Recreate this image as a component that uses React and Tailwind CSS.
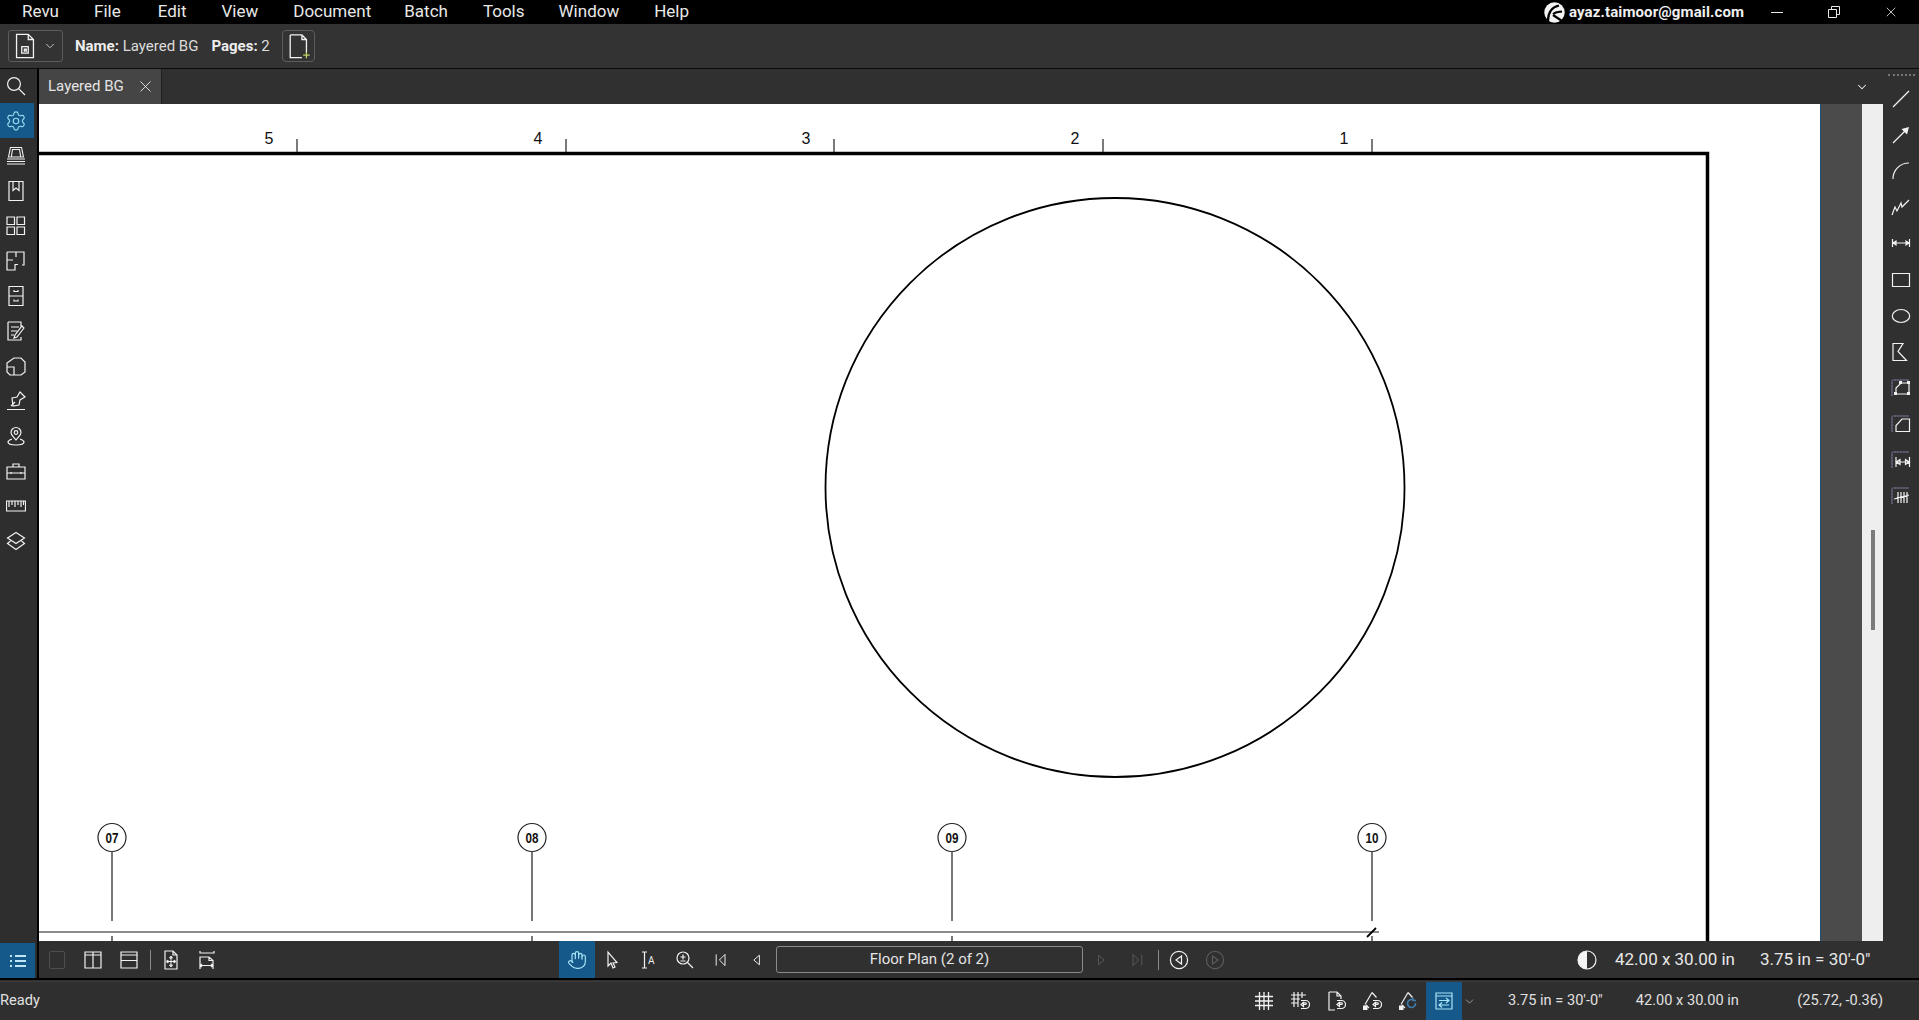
import React from "react";
import { Settings, ChevronDown, X, Hand } from "lucide-react";

const I = ({ s = 20, c = "#f2f2f2", w = 1.2, children, className = "" }) => (
  <svg width={s} height={s} viewBox="0 0 20 20" fill="none" stroke={c} strokeWidth={w} strokeLinejoin="miter" className={className}>
    {children}
  </svg>
);
const P = ({ d, ...r }) => <path d={d} {...r} />;

const railIcons = [
  <I><circle cx="8" cy="8" r="6.4" /><P d="M12.6 12.6L19 19" /></I>,
  <Settings size={22} strokeWidth={1.25} color="#9bdcf0" />,
  <I w={1.1}><P d="M4.5 1.5h11l2 9.5H2.5z M6.5 3.5h7l1.2 7.5H5.3z M1 13h18M1 15.5h18M1 18h18" /></I>,
  <I><P d="M3 .5h14v19H3z M7 .5v9l3-2.5 3 2.5V.5" /></I>,
  <I><P d="M1 1h7.5v7.5H1z M11 1h7.5v7.5H11z M1 11h7.5v7.5H1z M11 11h7.5v7.5H11z" /></I>,
  <I><P d="M1 1h17v13h-2 M1 1v18h8v-5.5h3 M10 1v5 M1 9h6" /></I>,
  <I><P d="M3 .5h14v19H3z M3 10h14 M8 4v1.5h4V4 M8 13.5V15h4v-1.5" /></I>,
  <I><P d="M2 1h13v5 M2 1v18h13v-3 M5 6h8 M5 10h6 M5 14h3 M18 7l-7 9-3 1 1-3 7-9z" /></I>,
  <I><P d="M1 7L8 2h7l4 4v10l-4 3H4l-3-3z M1 11h7v7.5" /></I>,
  <I><P d="M1 18.5h18 M6 7l5-1 3-5 5 5-5 3-1 5-6 1z M5 15l4-4" /></I>,
  <I><P d="M10 14C7 10 5 9 5 6.5a5 5 0 0 1 10 0C15 9 13 10 10 14z M6 13C3 14 2 15 2 16c0 2 4 3 8 3s8-1 8-3c0-1-1-2-4-3" /><circle cx="10" cy="6.5" r="1.8" /></I>,
  <I><P d="M1 6h18v12H1z M7 6V3h6v3 M1 12h18 M5 11v2 M15 11v2" /></I>,
  <I><P d="M.5 5h19v10H.5z M3 5v6 M6 5v4 M9 5v6 M12 5v4 M15 5v6 M17.5 5v4" /></I>,
  <I><P d="M10 1.5L18.5 7 10 12.5 1.5 7z M4.5 10L1.5 12.5 10 18.5l8.5-6-3-2.5" /></I>,
];

const snap = <P d="M1 2h17 M1 2v16 M4 1v2 M7 1v2 M10 1v2 M13 1v2 M16 1v2 M0 5h2 M0 8h2 M0 11h2 M0 14h2 M0 17h2" stroke="#6a6480" strokeWidth="1" />;
const rightIcons = [
  <I><P d="M2 18L18 2" /></I>,
  <I><P d="M2 18L14 6" /><P d="M18 2l-7.5 2 5.5 5.5z" fill="#f2f2f2" stroke="none" /></I>,
  <I><P d="M2 18C2 9 9 2 18 2" /></I>,
  <I><P d="M1 18l3-8 2 4 4-8 1 4 7-7" /></I>,
  <I><P d="M1.5 6v8 M18.5 6v8 M2 10h16 M2 10l3-2v4z M18 10l-3-2v4z" /></I>,
  <I><P d="M1.5 3.5h17v13h-17z" /></I>,
  <I><ellipse cx="10" cy="10" rx="8.7" ry="6.5" /></I>,
  <I><P d="M2 1.5h10l-5 8 8.5 9H2z" /></I>,
  <I>{snap}<P d="M5 16l0-6 5-5h8v11z" /><P d="M3 14h3v3H3z M8 3h3v3H8z M16 3h3v3h-3z M16 14h3v3h-3z" fill="#f2f2f2" stroke="none" /></I>,
  <I>{snap}<P d="M5 17.5v-6l6-6.5h7.5v12.5z" /></I>,
  <I>{snap}<P d="M5 7v10 M18.5 7v10 M5 12h13.5 M5 12l4-2.5v5z M18.5 12l-4-2.5v5z" /></I>,
  <I>{snap}<P d="M7 6l0 11 M10 6v11 M13 6v11 M16 6v11 M3 13L18 9" /></I>,
];

const undo = "M11 9.5h4.5a4 4 0 0 1 0 8H11 M13 13.5h2.5a.8.8 0 0 0 0-1.6H12 M11 13.5l2.5-2v4z";
const pencil = "M10 1.5L3 13.5 M10 1.5l4.5 5 M7 17l-3-3";
const square = "M1 14.5h4.5v4.5H1z";

const Cell = ({ w = "w-[36px]", children, className = "" }) => (
  <div className={`${w} h-full flex items-center justify-center shrink-0 ${className}`}>{children}</div>
);
const Sep = () => <div className="w-px h-[20px] ml-[3px] mr-[2px] bg-[#8a8a8a] shrink-0" />;

const Logo = () => (
  <svg width="21" height="21" viewBox="0 0 21 21" className="shrink-0">
    <circle cx="10.5" cy="10.5" r="10.2" fill="#f4f4f4" />
    <path d="M4 19C4 10 8 5 15 3.5 M9 12c3-2.5 6-2 9-2.5 M9 13l9 6" stroke="#000" strokeWidth="2.2" fill="none" />
  </svg>
);

const menu = [
  ["Revu", ""], ["File", ""], ["Edit", "ml-[2px]"], ["View", ""], ["Document", ""],
  ["Batch", "-ml-[2px]"], ["Tools", ""], ["Window", "-ml-[1px]"], ["Help", ""],
];

export default function App() {
  return (
    <div className="w-[1919px] h-[1020px] overflow-hidden flex flex-col bg-[#303030] text-[#ededed] [font-family:Roboto,sans-serif]">
      {/* title / menu bar */}
      <div className="h-[24px] bg-black flex items-center shrink-0">
        <div className="flex gap-[35px] pl-[22px] pb-[2px] text-[17px] text-[#e8e8e8] leading-none">
          {menu.map(([m, cls]) => <span key={m} className={cls}>{m}</span>)}
        </div>
        <div className="ml-auto flex items-center h-full">
          <Logo />
          <span className="ml-[4px] text-[15px] font-bold tracking-[0.12px] text-[#efefef] w-[175px] whitespace-nowrap">ayaz.taimoor@gmail.com</span>
          <div className="ml-[27px] w-[12px] h-px bg-[#e8e8e8]" />
          <svg className="ml-[45px]" width="12" height="12" viewBox="0 0 12 12" fill="none" stroke="#e8e8e8" strokeWidth="1"><path d="M.5 3.5h8v8h-8z M3.5 3V.5h8v8H9" /></svg>
          <X className="ml-[43px] mr-[20px]" size={16} strokeWidth={1.2} color="#e8e8e8" />
        </div>
      </div>

      {/* document toolbar */}
      <div className="h-[45px] shrink-0 flex items-center bg-[#333333] border-b border-[#0c0c0c] pl-[8px]">
        <div className="w-[55px] h-[32px] rounded-[3px] border border-[#5c5c5c] flex items-center pl-[3px] gap-[5px]">
          <I s={26} w={1}><P d="M3.5 1h9l4 4v14h-13z M12.5 1v4h4" /><P d="M7.5 10.5h5v5h-5z M9.5 12.5h1.5v1.5H9.5z" /></I>
          <ChevronDown size={14} strokeWidth={1.4} color="#e0e0e0" />
        </div>
        <div className="ml-[12px] text-[15px] whitespace-nowrap">
          <span className="font-bold">Name:</span> <span className="text-[#dcdcdc]">Layered BG</span>
        </div>
        <div className="ml-[13px] text-[15px] whitespace-nowrap">
          <span className="font-bold">Pages:</span> <span className="text-[#dcdcdc]">2</span>
        </div>
        <div className="ml-[12px] w-[33px] h-[32px] rounded-[4px] border border-[#5c5c5c] flex items-center justify-center">
          <I s={26} w={1}><P d="M4 1.5h9l3.5 3.5v10 M13 1.5V5h3.5 M4 1.5V19h9" /><P d="M14 17h5 M16.5 14.5v5" stroke="#c3d06a" /></I>
        </div>
      </div>

      {/* work area */}
      <div className="h-[909px] shrink-0 flex">
        {/* left rail */}
        <div className="w-[39px] shrink-0 bg-[#2e2e2e] border-r-2 border-black flex flex-col">
          {railIcons.map((ic, i) => (
            <div key={i} className={`${i === 0 ? "h-[34px]" : "h-[35px]"} w-[34px] pr-[2px] flex items-center justify-center shrink-0 ${i === 1 ? "bg-[#15598a]" : ""}`}>{ic}</div>
          ))}
          <div className="mt-auto h-[35px] w-[35px] bg-[#15598a] flex items-center justify-center">
            <I s={20} c="#bfe6f5" w={1.8}><P d="M7 5h11 M7 10h11 M7 15h11 M2 5h2 M2 10h2 M2 15h2" /></I>
          </div>
        </div>

        {/* centre */}
        <div className="w-[1844px] shrink-0 flex flex-col">
          <div className="h-[35px] shrink-0 flex items-stretch bg-[#303030]">
            <div className="w-[123px] bg-[#454545] flex items-center pl-[9px] text-[15px] text-[#e4e4e4] border-r border-[#1f1f1f]">
              Layered BG
              <X className="ml-[12px]" size={19} strokeWidth={1.1} color="#ededed" />
            </div>
            <ChevronDown className="ml-auto mr-[14px] self-center" size={14} strokeWidth={1.8} color="#ededed" />
          </div>

          <div className="flex-1 flex min-h-0">
            <div className="w-[1781px] bg-white shrink-0">
              <svg width="1781" height="837" viewBox="39 104 1781 837" className="block">
                <path d="M39 153.5H1707.5V941" fill="none" stroke="#000" strokeWidth="3.5" />
                {[[297, "5"], [566, "4"], [834, "3"], [1103, "2"], [1372, "1"]].map(([x, t]) => (
                  <g key={t}>
                    <line x1={x} y1="139" x2={x} y2="152" stroke="#333" strokeWidth="1.3" />
                    <text x={x - 28} y="143.5" textAnchor="middle" fontSize="16" fill="#111" fontFamily="Liberation Sans, sans-serif">{t}</text>
                  </g>
                ))}
                <circle cx="1115" cy="487.5" r="289.5" fill="none" stroke="#000" strokeWidth="1.8" />
                {[[112, "07"], [532, "08"], [952, "09"], [1372, "10"]].map(([x, t]) => (
                  <g key={t}>
                    <circle cx={x} cy="837.5" r="14" fill="#fff" stroke="#222" strokeWidth="1.2" />
                    <text x={x} y="842.5" textAnchor="middle" fontSize="14" fontWeight="700" fill="#111" fontFamily="Liberation Sans, sans-serif" textLength="13" lengthAdjust="spacingAndGlyphs">{t}</text>
                    <line x1={x} y1="851.5" x2={x} y2="921" stroke="#555" strokeWidth="1.6" />
                    <line x1={x} y1="936" x2={x} y2="941" stroke="#555" strokeWidth="1.6" />
                  </g>
                ))}
                <line x1="39" y1="932" x2="1379" y2="932" stroke="#666" strokeWidth="1.6" />
                <line x1="1367" y1="937" x2="1376" y2="928" stroke="#000" strokeWidth="1.8" />
              </svg>
            </div>
            <div className="w-[42px] bg-[#4b4b4b] border-l border-[#1f4e73] shrink-0" />
            <div className="w-[21px] bg-[#eeeeee] shrink-0 pt-[426px] pl-[9px]">
              <div className="w-[4px] h-[100px] bg-[#7b7b7b]" />
            </div>
          </div>

          {/* page toolbar */}
          <div className="h-[37px] shrink-0 bg-[#303030] flex items-center text-[15px]">
            <Cell><div className="w-[16px] h-[18px] border border-[#4e4e4e] rounded-[2px]" /></Cell>
            <Cell><I><P d="M2 2h16v16H2z M2 5h16 M10 2v16" /></I></Cell>
            <Cell><I><P d="M2 2h16v16H2z M2 5h16 M2 10.5h16" /></I></Cell>
            <Sep />
            <Cell><I><P d="M4 1h8l4 4v14H4z M12 1v4h4" /><P d="M10 7v9 M6 11.5h8 M10 6l-1.5 2h3z M10 17l-1.5-2h3z M5 11.5l2-1.5v3z M15 11.5l-2-1.5v3z" strokeWidth="1" /></I></Cell>
            <Cell><I><P d="M3 1v2h14V1 M3 19V7h9l4 3.5V19 M12 7v3.5h4 M3 15.5h13 M5 14l-2 1.5L5 17 M14 14l2 1.5L14 17" /></I></Cell>
            <div className="ml-[334px] flex items-center h-full">
              <Cell className="bg-[#15598a]"><Hand size={20} strokeWidth={1.4} color="#a8e4f5" /></Cell>
              <Cell><I><P d="M5 2v14l3-3 2 5 2-1-2-4 4-.5z" /></I></Cell>
              <Cell><I><P d="M3 2h5 M3 18h5 M5.5 2v16" /><text x="9" y="14" fontSize="10" fill="#eee" stroke="none" fontFamily="Roboto">A</text></I></Cell>
              <Cell><I><circle cx="8" cy="8" r="6" /><P d="M12.5 12.5L18 18 M5.5 7h5 M8 4.5V9.5 M5.5 11h5" /></I></Cell>
              <Cell><I s={16}><P d="M4 3v14 M15 3L8 10l7 7z" /></I></Cell>
              <Cell><I s={16}><P d="M13 4L6 10l7 6z" /></I></Cell>
              <div className="w-[307px] h-[27px] shrink-0 ml-[1px] rounded-[3px] border border-[#8a8a8a] flex items-center justify-center text-[#e4e4e4] text-[15px]">Floor Plan (2 of 2)</div>
              <Cell><I s={16} c="#5a5a5a"><P d="M7 4l7 6-7 6z" /></I></Cell>
              <Cell><I s={16} c="#5a5a5a"><P d="M16 3v14 M5 3l7 7-7 7z" /></I></Cell>
              <Sep />
              <Cell><I><circle cx="10" cy="10" r="8.6" /><P d="M12.5 6L7 10l5.5 4z" /></I></Cell>
              <Cell><I c="#5a5a5a"><circle cx="10" cy="10" r="8.6" /><P d="M7.5 6L13 10l-5.5 4z" /></I></Cell>
            </div>
            <div className="ml-[344px] flex items-center">
              <svg width="20" height="20" viewBox="0 0 20 20"><circle cx="10" cy="10" r="9" fill="none" stroke="#f4f4f4" strokeWidth="1.2" /><path d="M10 1a9 9 0 0 0 0 18z" fill="#f4f4f4" /></svg>
              <span className="ml-[18px] text-[17px] text-[#e8e8e8] whitespace-nowrap w-[120px]">42.00 x 30.00 in</span>
              <span className="ml-[25px] text-[17px] text-[#e8e8e8] whitespace-nowrap">3.75 in = 30'-0"</span>
            </div>
          </div>
        </div>

        {/* right rail */}
        <div className="w-[36px] shrink-0 bg-[#303030] flex flex-col items-center pt-[5px]">
          <div className="w-[27px] border-t-2 border-dotted border-[#777] mb-[5px]" />
          {rightIcons.map((ic, i) => (
            <div key={i} className="h-[36.1px] flex items-center justify-center shrink-0">{ic}</div>
          ))}
        </div>
      </div>

      {/* status bar */}
      <div className="flex-1 flex flex-col bg-[#2f2f2f] min-h-0">
        <div className="h-[2px] bg-black shrink-0" />
        <div className="h-px mt-[1px] bg-[#3c3c3c] shrink-0" />
        <div className="flex-1 flex items-center text-[14.6px] text-[#e0e0e0]">
          <span className="w-[41px]">Ready</span>
          <div className="ml-[1205px] flex items-center h-full">
            <Cell><I w={1.3}><P d="M5.5 1v18 M10 1v18 M14.5 1v18 M1 5.5h18 M1 10h18 M1 14.5h18" /></I></Cell>
            <Cell><I><P d="M4 1v15 M8 1v15 M12 1v6 M1 4h15 M1 8h9 M1 12h7" /><P d={undo} /></I></Cell>
            <Cell><I><P d="M3 1h8l4 4v3 M11 1v4h4 M3 1v18h6" /><P d={undo} /></I></Cell>
            <Cell><I><P d={pencil} /><P d={square} fill="#f2f2f2" stroke="none" /><P d={undo} /></I></Cell>
            <Cell><I><P d={pencil} /><P d={square} fill="#f2f2f2" stroke="none" /><P d="M17.5 12a4 4 0 1 1-2-3 M15 6.5v3h3" stroke="#3f7fb0" strokeWidth="1.6" /></I></Cell>
            <Cell className="bg-[#15598a]"><I c="#a8e4f5"><P d="M2 2h16v16H2z M2 5h16 M5 9.5h10 M12 7l3 2.5-3 2.5 M15 14H5 M8 11.5L5 14l3 2.5" /></I></Cell>
            <ChevronDown className="ml-[1px]" size={13} strokeWidth={1.2} color="#cfcfcf" />
          </div>
          <span className="ml-[32px] whitespace-nowrap">3.75 in = 30'-0"</span>
          <span className="ml-[33px] whitespace-nowrap">42.00 x 30.00 in</span>
          <span className="ml-auto mr-[36px] whitespace-nowrap">(25.72, -0.36)</span>
        </div>
      </div>
    </div>
  );
}
